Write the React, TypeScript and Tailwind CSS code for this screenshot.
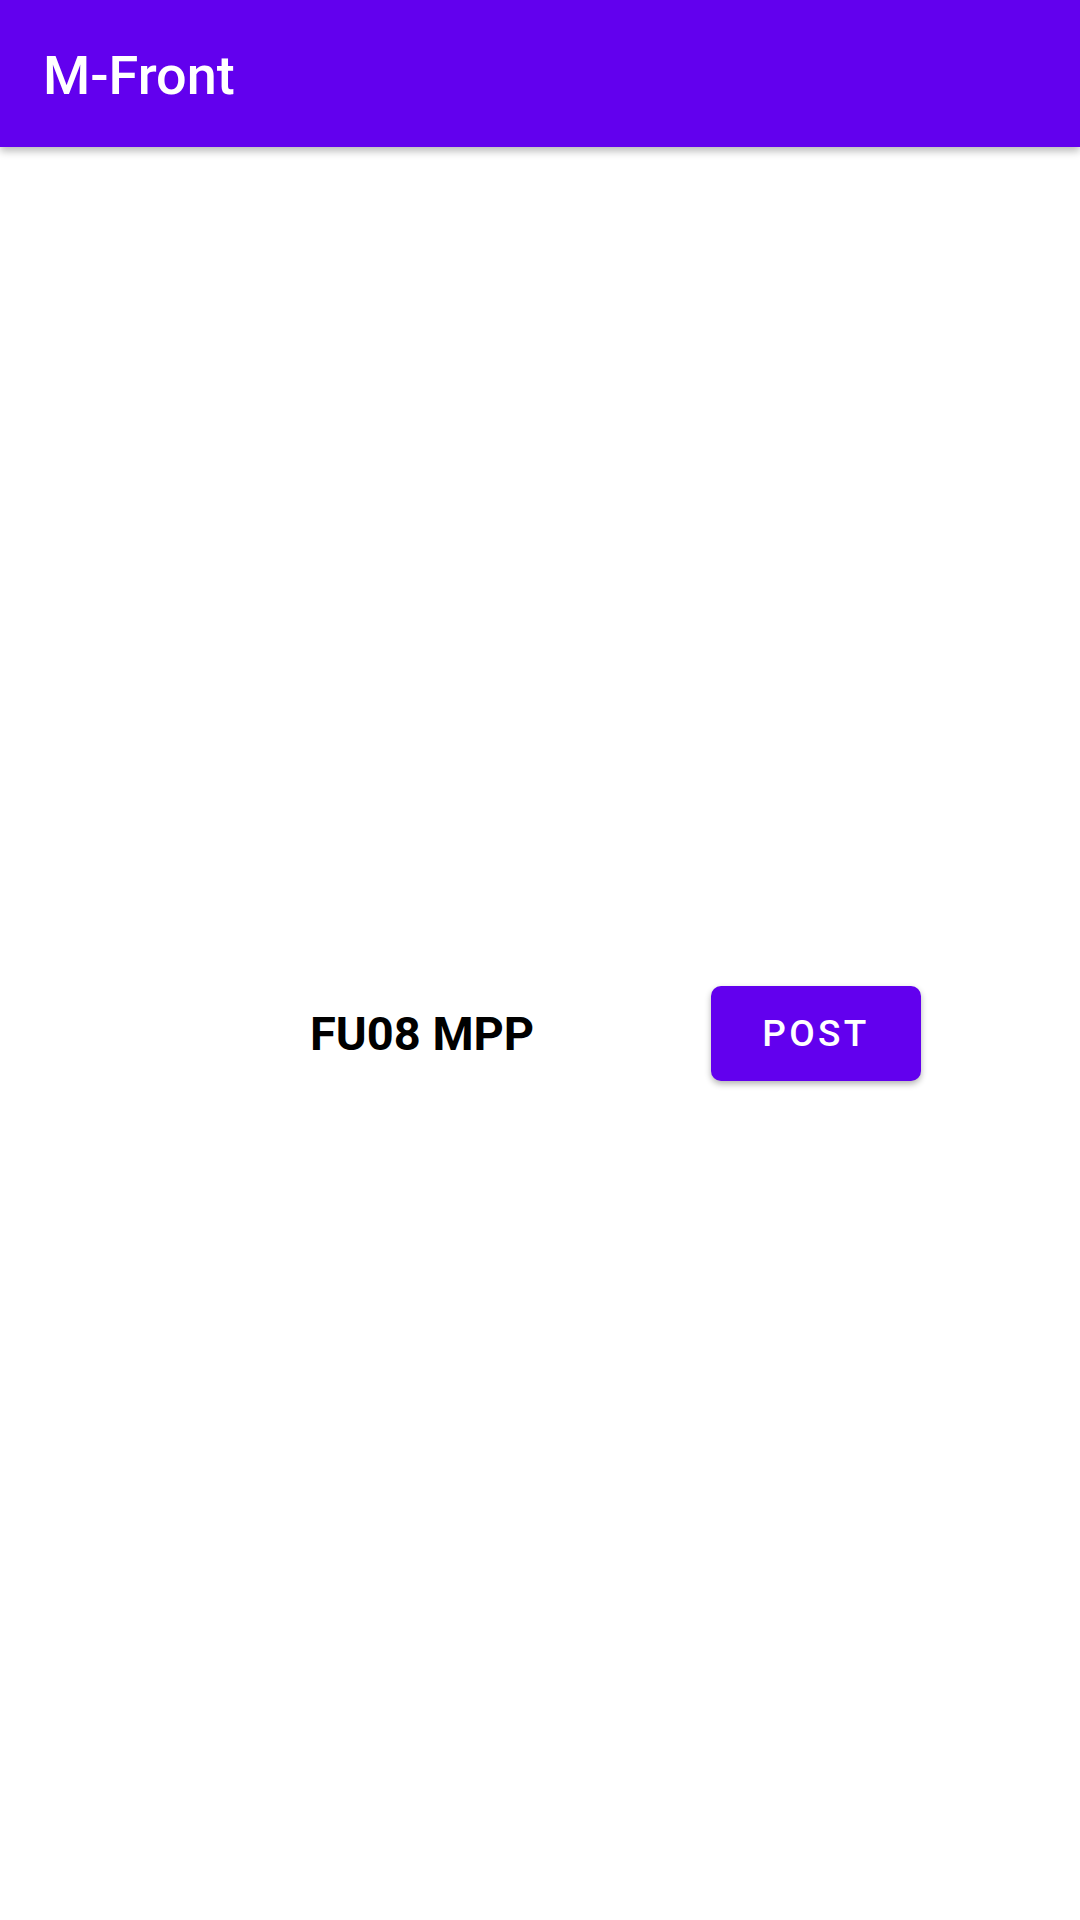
export default function App() {
  return (
    <div className="flex min-h-screen flex-col bg-white font-['Roboto',sans-serif]">
      <header className="relative z-10 flex h-[147px] items-center bg-[#6200ee] pl-[43px] pt-[4px] shadow-[0_4px_8px_rgba(0,0,0,0.28)]">
        <h1 className="text-[54px] font-medium leading-none text-white">M-Front</h1>
      </header>
      <main className="flex flex-1 items-center">
        <div className="flex w-full items-center pl-[310px]">
          <div className="w-[401px] text-[47px] font-bold leading-none text-black">FU08 MPP</div>
          <button className="flex h-[95px] w-[210px] items-center justify-center rounded-[10px] bg-[#6200ee] text-[37px] font-medium tracking-[3.3px] text-white shadow-[0_3px_6px_rgba(0,0,0,0.3)]">
            POST
          </button>
        </div>
      </main>
    </div>
  );
}
